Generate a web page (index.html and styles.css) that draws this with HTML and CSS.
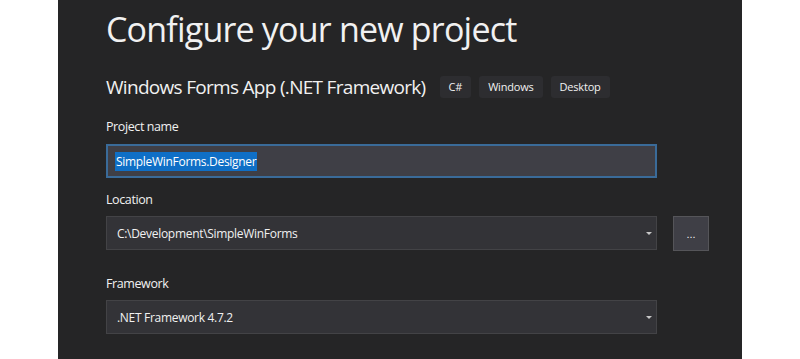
FILE: index.html
```html
<!DOCTYPE html>
<html>

<head>
  <meta charset="utf-8">
  <meta name="viewport" content="width=device-width">
  <title>Configure your new project</title>
  <link rel="stylesheet" href="styles.css">
</head>

<body>
  <div class="panel">
    <h1 class="title">Configure your new project</h1>

    <div class="template-row">
      <span class="template-name">Windows Forms App (.NET Framework)</span>
      <span class="tag">C#</span>
      <span class="tag">Windows</span>
      <span class="tag">Desktop</span>
    </div>

    <!-- Project name -->
    <label class="field-label first">Project name</label>
    <div class="text-box focused">
      <span class="selected">SimpleWinForms.Designer</span>
    </div>

    <!-- Location -->
    <label class="field-label">Location</label>
    <div class="row">
      <div class="combo">
        <span>C:\Development\SimpleWinForms</span>
        <span class="arrow"></span>
      </div>
      <button class="browse" type="button">...</button>
    </div>

    <!-- Framework -->
    <label class="field-label spaced">Framework</label>
    <div class="combo">
      <span>.NET Framework 4.7.2</span>
      <span class="arrow"></span>
    </div>
  </div>
</body>

</html>
```

FILE: styles.css
```css
body {
  margin: 0;
  background-color: white;
  font-family: "Open Sans", "Noto Sans", sans-serif;
}

.panel {
  width: 636px;
  height: 359px;
  margin-left: 58px;
  padding: 0 0 0 48px;
  background-color: #252526;
  color: #f1f1f1;
  overflow: hidden;
}

.title {
  margin: 0;
  padding-top: 6px;
  font-size: 34px;
  font-weight: 400;
  line-height: 46px;
  letter-spacing: -0.8px;
}

.template-row {
  display: flex;
  align-items: center;
  margin-top: 24px;
  height: 22px;
}

.template-name {
  font-size: 19px;
  letter-spacing: -0.7px;
  margin-right: 14px;
}

.tag {
  box-sizing: border-box;
  height: 22px;
  line-height: 22px;
  background-color: #2d2d30;
  border-radius: 3px;
  padding: 0 9px;
  margin-right: 8px;
  font-size: 11px;
  letter-spacing: -0.2px;
}

.field-label {
  display: block;
  font-size: 12.5px;
  letter-spacing: -0.4px;
  margin-top: 13px;
  height: 18px;
  line-height: 18px;
}

.field-label.first {
  margin-top: 20px;
}

.field-label.spaced {
  margin-top: 24px;
}

.text-box,
.combo {
  box-sizing: border-box;
  width: 551px;
  height: 34px;
  margin-top: 7px;
  display: flex;
  align-items: center;
  padding: 0 10px;
  font-size: 12px;
  letter-spacing: -0.3px;
  border: 1px solid #434346;
  background-color: #333337;
}

.text-box.focused {
  margin-top: 8px;
  border: 2px solid #3a6b99;
  background-color: #3f3f46;
  padding: 0 7px;
}

.selected {
  background-color: #0f6fc6;
  color: white;
  padding: 1px 1px;
}

.combo {
  justify-content: space-between;
  padding-right: 4px;
}

.arrow {
  width: 0;
  height: 0;
  border-left: 3px solid transparent;
  border-right: 3px solid transparent;
  border-top: 3px solid #c8c8c8;
}

.row {
  display: flex;
  gap: 16px;
}

.browse {
  box-sizing: border-box;
  margin-top: 7px;
  width: 36px;
  height: 35px;
  border: 1px solid #555559;
  background-color: #3f3f46;
  color: #f1f1f1;
  font-size: 11px;
  padding: 0;
}
```
